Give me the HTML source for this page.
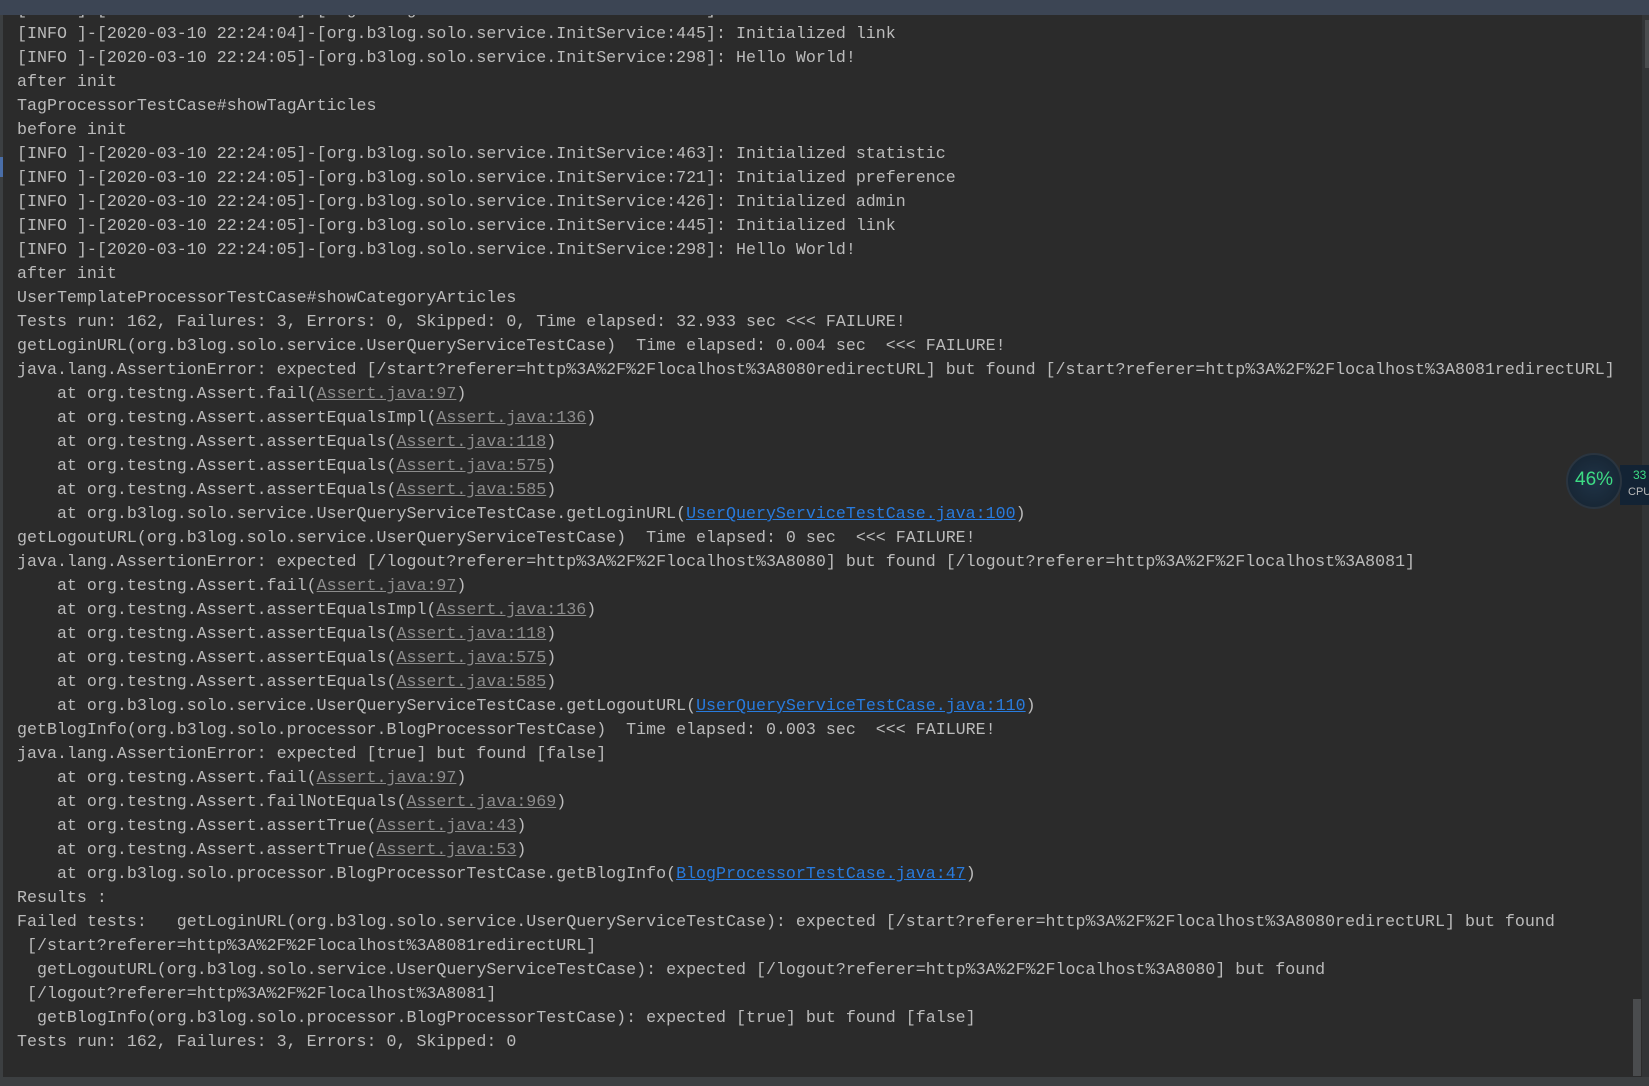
<!DOCTYPE html>
<html><head><meta charset="utf-8"><style>
html,body{margin:0;padding:0;width:1649px;height:1086px;overflow:hidden;background:#2b2b2b}
.top{position:absolute;left:0;top:0;width:1649px;height:15px;background:#3c4554}
.left{position:absolute;left:0;top:15px;width:3px;height:1062px;background:#3c3f41}
.lb{position:absolute;left:0;top:157px;width:3px;height:20px;background:#4a6ea8}
.right{position:absolute;left:1642px;top:15px;width:7px;height:1062px;background:#323436}
.thumb{position:absolute;left:1633px;top:999px;width:8px;height:77px;background:#4a4c4e}
.thumb2{position:absolute;left:1645px;top:20px;width:4px;height:48px;background:#4a4c4e}
.bot{position:absolute;left:0;top:1077px;width:1649px;height:9px;background:#3c3f41}
pre{position:absolute;left:17px;top:-2px;margin:0;font-family:"Liberation Mono",monospace;font-size:16.65px;line-height:24px;color:#bbbbbb;white-space:pre}
.g{color:#8c8c8c;text-decoration:underline}
.b{color:#287bde;text-decoration:underline}
.cpu{position:absolute;left:1566px;top:453px;width:56px;height:56px;border-radius:50%;background:radial-gradient(#1f3346,#15222f);border:2px solid #2a3540;box-sizing:border-box}
.cpu span{position:absolute;left:7px;top:14px;color:#3ddc84;font-family:"Liberation Sans",sans-serif;font-size:19px}
.tag{position:absolute;left:1620px;top:465px;width:29px;height:40px;background:#132334}
.tag .a{position:absolute;left:13px;top:3px;color:#3ddc84;font:12px "Liberation Sans",sans-serif}
.tag .c{position:absolute;left:8px;top:21px;color:#bbb;font:11px "Liberation Sans",sans-serif}
</style></head><body>
<pre>[INFO ]-[2020-03-10 22:24:04]-[org.b3log.solo.service.InitService:426]: Initialized admin
[INFO ]-[2020-03-10 22:24:04]-[org.b3log.solo.service.InitService:445]: Initialized link
[INFO ]-[2020-03-10 22:24:05]-[org.b3log.solo.service.InitService:298]: Hello World!
after init
TagProcessorTestCase#showTagArticles
before init
[INFO ]-[2020-03-10 22:24:05]-[org.b3log.solo.service.InitService:463]: Initialized statistic
[INFO ]-[2020-03-10 22:24:05]-[org.b3log.solo.service.InitService:721]: Initialized preference
[INFO ]-[2020-03-10 22:24:05]-[org.b3log.solo.service.InitService:426]: Initialized admin
[INFO ]-[2020-03-10 22:24:05]-[org.b3log.solo.service.InitService:445]: Initialized link
[INFO ]-[2020-03-10 22:24:05]-[org.b3log.solo.service.InitService:298]: Hello World!
after init
UserTemplateProcessorTestCase#showCategoryArticles
Tests run: 162, Failures: 3, Errors: 0, Skipped: 0, Time elapsed: 32.933 sec &lt;&lt;&lt; FAILURE!
getLoginURL(org.b3log.solo.service.UserQueryServiceTestCase)  Time elapsed: 0.004 sec  &lt;&lt;&lt; FAILURE!
java.lang.AssertionError: expected [/start?referer=http%3A%2F%2Flocalhost%3A8080redirectURL] but found [/start?referer=http%3A%2F%2Flocalhost%3A8081redirectURL]
    at org.testng.Assert.fail(<span class="g">Assert.java:97</span>)
    at org.testng.Assert.assertEqualsImpl(<span class="g">Assert.java:136</span>)
    at org.testng.Assert.assertEquals(<span class="g">Assert.java:118</span>)
    at org.testng.Assert.assertEquals(<span class="g">Assert.java:575</span>)
    at org.testng.Assert.assertEquals(<span class="g">Assert.java:585</span>)
    at org.b3log.solo.service.UserQueryServiceTestCase.getLoginURL(<span class="b">UserQueryServiceTestCase.java:100</span>)
getLogoutURL(org.b3log.solo.service.UserQueryServiceTestCase)  Time elapsed: 0 sec  &lt;&lt;&lt; FAILURE!
java.lang.AssertionError: expected [/logout?referer=http%3A%2F%2Flocalhost%3A8080] but found [/logout?referer=http%3A%2F%2Flocalhost%3A8081]
    at org.testng.Assert.fail(<span class="g">Assert.java:97</span>)
    at org.testng.Assert.assertEqualsImpl(<span class="g">Assert.java:136</span>)
    at org.testng.Assert.assertEquals(<span class="g">Assert.java:118</span>)
    at org.testng.Assert.assertEquals(<span class="g">Assert.java:575</span>)
    at org.testng.Assert.assertEquals(<span class="g">Assert.java:585</span>)
    at org.b3log.solo.service.UserQueryServiceTestCase.getLogoutURL(<span class="b">UserQueryServiceTestCase.java:110</span>)
getBlogInfo(org.b3log.solo.processor.BlogProcessorTestCase)  Time elapsed: 0.003 sec  &lt;&lt;&lt; FAILURE!
java.lang.AssertionError: expected [true] but found [false]
    at org.testng.Assert.fail(<span class="g">Assert.java:97</span>)
    at org.testng.Assert.failNotEquals(<span class="g">Assert.java:969</span>)
    at org.testng.Assert.assertTrue(<span class="g">Assert.java:43</span>)
    at org.testng.Assert.assertTrue(<span class="g">Assert.java:53</span>)
    at org.b3log.solo.processor.BlogProcessorTestCase.getBlogInfo(<span class="b">BlogProcessorTestCase.java:47</span>)
Results :
Failed tests:   getLoginURL(org.b3log.solo.service.UserQueryServiceTestCase): expected [/start?referer=http%3A%2F%2Flocalhost%3A8080redirectURL] but found
 [/start?referer=http%3A%2F%2Flocalhost%3A8081redirectURL]
  getLogoutURL(org.b3log.solo.service.UserQueryServiceTestCase): expected [/logout?referer=http%3A%2F%2Flocalhost%3A8080] but found
 [/logout?referer=http%3A%2F%2Flocalhost%3A8081]
  getBlogInfo(org.b3log.solo.processor.BlogProcessorTestCase): expected [true] but found [false]
Tests run: 162, Failures: 3, Errors: 0, Skipped: 0</pre>
<div class="top"></div>
<div class="left"></div><div class="lb"></div>
<div class="right"></div><div class="thumb2"></div><div class="thumb"></div>
<div class="bot"></div>
<div class="tag"><div class="a">33</div><div class="c">CPU</div></div>
<div class="cpu"><span>46%</span></div>
</body></html>
